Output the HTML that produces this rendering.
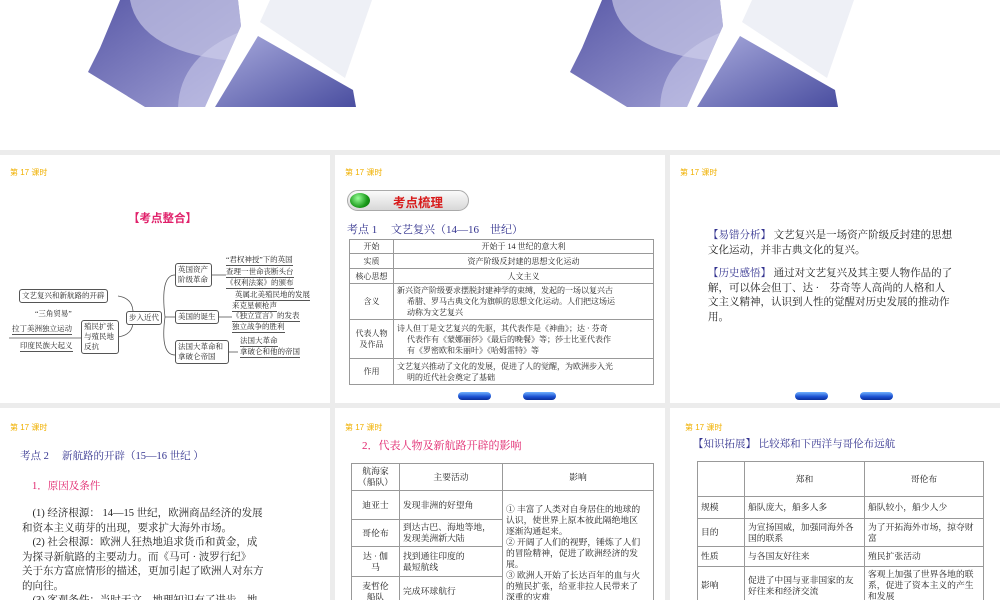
<!DOCTYPE html>
<html><head><meta charset="utf-8">
<style>
*{margin:0;padding:0;box-sizing:border-box}
body{width:1000px;height:600px;overflow:hidden;background:#fff;position:relative;font-family:"Liberation Serif","Noto Serif CJK SC","Noto Sans CJK SC",serif;color:#222}
.gray{position:absolute;left:0;top:150px;width:1000px;height:450px;background:#ececec}
.s{position:absolute;background:#fff;overflow:hidden}
.a{position:absolute;white-space:nowrap}
.hd{position:absolute;left:10px;top:12px;font-size:8px;color:#f0b000;font-family:"Liberation Sans","Noto Sans CJK SC",sans-serif}
.blue{color:#33338f}
.pink{color:#e0206a}
table{position:absolute;border-collapse:collapse;font-size:8px;line-height:11px}
td{border:1px solid #999;padding:0 3px;vertical-align:middle}
.btn{position:absolute;width:33px;height:8px;border-radius:4px;background:linear-gradient(#6fb0ff,#1a4fd0 60%,#0c2f9a);top:237px}
.mm{position:absolute;font-size:7.5px;white-space:nowrap;line-height:10px}
.bx{border:1px solid #555;border-radius:3px;padding:1px 2px;background:#fff}
.ul{border-bottom:1px solid #555}
p.t{font-size:10.5px;line-height:14.5px}
</style></head><body>
<svg style="position:absolute;left:0;top:0" width="1000" height="108">
<defs>
<linearGradient id="g1" x1="0" y1="0" x2="1" y2="1"><stop offset="0" stop-color="#5a5aa8"/><stop offset="1" stop-color="#a0a0d4"/></linearGradient>
<linearGradient id="g2" x1="1" y1="1" x2="0" y2="0"><stop offset="0" stop-color="#4a4ea0"/><stop offset="1" stop-color="#a8aadc"/></linearGradient>
<clipPath id="c1"><polygon points="120,0 238,0 241,26 205,107 145,107 88,72 100,48"/></clipPath>
<g id="gr">
<polygon points="270,0 372,0 345,78 260,22" fill="#eef0f6"/>
<polygon points="120,0 238,0 241,26 205,107 145,107 88,72 100,48" fill="url(#g1)"/>
<g clip-path="url(#c1)">
<path d="M130,0 Q140,55 245,62 L245,0Z" fill="#c6c6e6" opacity="0.7"/>
<path d="M245,30 Q178,55 178,110 L215,110Z" fill="#d0d0ec" opacity="0.55"/>
</g>
<polygon points="258,36 353,90 356,107 215,107" fill="url(#g2)"/>
</g>
</defs>
<use href="#gr"/>
<use href="#gr" x="482"/>
</svg>
<div class="gray"></div>

<div class="s" style="left:0;top:155px;width:330px;height:248px">
<div class="hd">第 17 课时</div>
<div class="a pink" style="left:128px;top:55px;font-size:11.5px;font-weight:bold;font-family:'Liberation Sans','Noto Sans CJK SC',sans-serif">【考点整合】</div>
<svg style="position:absolute;left:0;top:0" width="330" height="248" fill="none" stroke="#555" stroke-width="0.8">
<path d="M118,141 Q132,143 133,156"/>
<path d="M118,182 Q132,180 133,168"/>
<path d="M165,162 Q160,120 175,120"/>
<path d="M165,162 L175,162"/>
<path d="M165,162 Q160,200 175,200"/>
<path d="M212,120 L226,120"/><path d="M218,162 L232,162"/><path d="M228,197 L238,197"/>
<path d="M9,183 L81,183"/>
</svg>
<div class="mm bx" style="left:19px;top:134px">文艺复兴和新航路的开辟</div>
<div class="mm" style="left:35px;top:154px">“三角贸易”</div>
<div class="mm ul" style="left:12px;top:169px">拉丁美洲独立运动</div>
<div class="mm ul" style="left:20px;top:186px">印度民族大起义</div>
<div class="mm bx" style="left:81px;top:165px;white-space:normal;width:38px;line-height:10px">殖民扩张与殖民地反抗</div>
<div class="mm bx" style="left:126px;top:156px">步入近代</div>
<div class="mm bx" style="left:175px;top:108px;white-space:normal;width:37px">英国资产阶级革命</div>
<div class="mm bx" style="left:175px;top:155px">美国的诞生</div>
<div class="mm bx" style="left:175px;top:185px;white-space:normal;width:54px">法国大革命和拿破仑帝国</div>
<div class="mm ul" style="left:226px;top:100px">“君权神授”下的英国</div>
<div class="mm ul" style="left:226px;top:112px">查理一世命丧断头台</div>
<div class="mm ul" style="left:226px;top:123px">《权利法案》的颁布</div>
<div class="mm ul" style="left:235px;top:135px">英属北美殖民地的发展</div>
<div class="mm ul" style="left:232px;top:146px">来克星顿枪声</div>
<div class="mm ul" style="left:232px;top:156px">《独立宣言》的发表</div>
<div class="mm ul" style="left:232px;top:167px">独立战争的胜利</div>
<div class="mm ul" style="left:240px;top:181px">法国大革命</div>
<div class="mm ul" style="left:240px;top:192px">拿破仑和他的帝国</div>
</div>

<div class="s" style="left:335px;top:155px;width:330px;height:248px">
<div class="hd">第 17 课时</div>
<div style="position:absolute;left:12px;top:35px;width:122px;height:21px;border-radius:11px;background:linear-gradient(#fafafa,#d8d8d8);border:1px solid #aaa"></div>
<div style="position:absolute;left:15px;top:38px;width:20px;height:15px;border-radius:50%;background:radial-gradient(circle at 40% 35%,#9f9,#1a9a1a 60%,#0a6a0a)"></div>
<div class="a" style="left:58px;top:37px;font-size:12.5px;font-weight:bold;color:#d81a1a;font-family:'Liberation Sans','Noto Sans CJK SC',sans-serif">考点梳理</div>
<div class="a blue" style="left:12px;top:66px;font-size:11px">考点 1　 文艺复兴（14—16　世纪）</div>
<table style="left:14px;top:84px;width:305px">
<tr style="height:14px"><td style="width:44px;text-align:center">开始</td><td style="text-align:center">开始于 14 世纪的意大利</td></tr>
<tr style="height:15px"><td style="text-align:center">实质</td><td style="text-align:center">资产阶级反封建的思想文化运动</td></tr>
<tr style="height:15px"><td style="text-align:center">核心思想</td><td style="text-align:center">人文主义</td></tr>
<tr style="height:36px"><td style="text-align:center">含义</td><td>新兴资产阶级要求摆脱封建神学的束缚，发起的一场以复兴古<br>　 希腊、罗马古典文化为旗帜的思想文化运动。人们把这场运<br>　 动称为文艺复兴</td></tr>
<tr style="height:39px"><td style="text-align:center">代表人物<br>及作品</td><td>诗人但丁是文艺复兴的先驱，其代表作是《神曲》；达 · 芬奇<br>　 代表作有《蒙娜丽莎》《最后的晚餐》等；莎士比亚代表作<br>　 有《罗密欧和朱丽叶》《哈姆雷特》等</td></tr>
<tr style="height:26px"><td style="text-align:center">作用</td><td>文艺复兴推动了文化的发展，促进了人的觉醒，为欧洲步入光<br>　 明的近代社会奠定了基础</td></tr>
</table>
<div class="btn" style="left:123px"></div><div class="btn" style="left:188px"></div>
</div>

<div class="s" style="left:670px;top:155px;width:330px;height:248px">
<div class="hd" style="left:10px">第 17 课时</div>
<p class="t a" style="left:38px;top:74px"><span class="blue">【易错分析】</span> 文艺复兴是一场资产阶级反封建的思想<br>文化运动，并非古典文化的复兴。</p>
<p class="t a" style="left:38px;top:112px"><span class="blue">【历史感悟】</span> 通过对文艺复兴及其主要人物作品的了<br>解，可以体会但丁、达 ·　芬奇等人高尚的人格和人<br>文主义精神，认识到人性的觉醒对历史发展的推动作<br>用。</p>
<div class="btn" style="left:125px"></div><div class="btn" style="left:190px"></div>
</div>

<div class="s" style="left:0;top:408px;width:330px;height:192px">
<div class="hd" style="top:14px">第 17 课时</div>
<div class="a blue" style="left:20px;top:40px;font-size:10.5px">考点 2　 新航路的开辟（15—16 世纪 ）</div>
<div class="a pink" style="left:32px;top:70px;font-size:10.5px">1．原因及条件</div>
<p class="t a" style="left:22px;top:99px">　(1) 经济根源： 14—15 世纪，欧洲商品经济的发展<br>和资本主义萌芽的出现，要求扩大海外市场。<br>　(2) 社会根源：欧洲人狂热地追求货币和黄金，成<br>为探寻新航路的主要动力。而《马可 · 波罗行纪》<br>关于东方富庶情形的描述，更加引起了欧洲人对东方<br>的向往。<br>　(3) 客观条件：当时天文、地理知识有了进步，地<br>圆学说流行，为新航路开辟提供了客观条件。</p>
</div>

<div class="s" style="left:335px;top:408px;width:330px;height:192px">
<div class="hd" style="top:14px">第 17 课时</div>
<div class="a pink" style="left:27px;top:29px;font-size:11px">2．代表人物及新航路开辟的影响</div>
<table style="left:16px;top:55px;width:303px;font-size:8.8px;line-height:11px">
<tr style="height:27px"><td style="width:48px;text-align:center">航海家<br>（船队）</td><td style="width:103px;text-align:center">主要活动</td><td style="text-align:center">影响</td></tr>
<tr style="height:29px"><td style="text-align:center">迪亚士</td><td>发现非洲的好望角</td><td rowspan="4" style="vertical-align:top;padding-top:13px">① 丰富了人类对自身居住的地球的<br>认识，使世界上原本彼此隔绝地区<br>逐渐沟通起来。<br>② 开阔了人们的视野，锤炼了人们<br>的冒险精神，促进了欧洲经济的发<br>展。<br>③ 欧洲人开始了长达百年的血与火<br>的殖民扩张，给亚非拉人民带来了<br>深重的灾难</td></tr>
<tr style="height:27px"><td style="text-align:center">哥伦布</td><td>到达古巴、海地等地，<br>发现美洲新大陆</td></tr>
<tr style="height:30px"><td style="text-align:center">达 · 伽<br>马</td><td>找到通往印度的<br>最短航线</td></tr>
<tr style="height:30px"><td style="text-align:center">麦哲伦<br>船队</td><td>完成环球航行</td></tr>
</table>
</div>

<div class="s" style="left:670px;top:408px;width:330px;height:192px">
<div class="hd" style="left:15px;top:14px">第 17 课时</div>
<div class="a blue" style="left:23px;top:28px;font-size:10.5px">【知识拓展】 比较郑和下西洋与哥伦布远航</div>
<table style="left:27px;top:53px;width:287px;font-size:8.8px;line-height:11px">
<tr style="height:35px"><td style="width:47px"></td><td style="width:120px;text-align:center">郑和</td><td style="text-align:center">哥伦布</td></tr>
<tr style="height:22px"><td>规模</td><td>船队庞大，船多人多</td><td>船队较小，船少人少</td></tr>
<tr style="height:28px"><td>目的</td><td>为宣扬国威，加强同海外各<br>国的联系</td><td>为了开拓海外市场，掠夺财<br>富</td></tr>
<tr style="height:20px"><td>性质</td><td>与各国友好往来</td><td>殖民扩张活动</td></tr>
<tr style="height:38px"><td>影响</td><td>促进了中国与亚非国家的友<br>好往来和经济交流</td><td>客观上加强了世界各地的联<br>系，促进了资本主义的产生<br>和发展</td></tr>
</table>
</div>
</body></html>
